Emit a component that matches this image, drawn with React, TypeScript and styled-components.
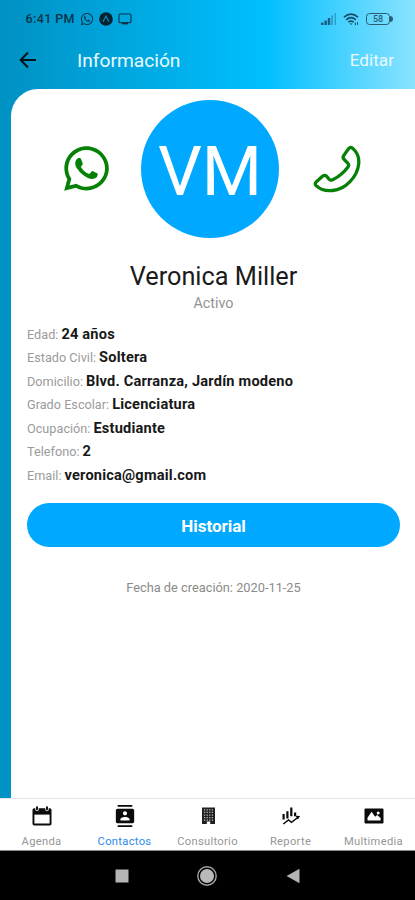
import React from "react";
import styled, { createGlobalStyle } from "styled-components";
import { FaWhatsapp } from "react-icons/fa";
import { MdContacts } from "react-icons/md";

const GlobalStyle = createGlobalStyle`
  * { box-sizing: border-box; }
  body { margin: 0; background: #000; font-family: Roboto, "Liberation Sans", sans-serif; }
  button { font: inherit; border: 0; padding: 0; background: none; }
  svg { display: block; flex: none; }
`;

const Screen = styled.div`
  width: 415px;
  height: 900px;
  display: flex;
  flex-direction: column;
  overflow: hidden;
  background: #000;
`;

const Backdrop = styled.div`
  flex: none;
  height: 798px;
  display: flex;
  flex-direction: column;
  background: linear-gradient(90deg, #0092c3 0%, #0093c5 3%, #00bfff 64%, #8ae3ff 100%);
`;

const StatusBar = styled.div`
  height: 38px;
  padding: 0 22px 0 25.5px;
  display: flex;
  align-items: center;
  justify-content: space-between;
  color: #0b3448;
`;

const StatusGroup = styled.div<{ $gap: number }>`
  display: flex;
  align-items: center;
  gap: ${(p) => p.$gap}px;
`;

const Clock = styled.span`
  font-size: 12.5px;
  line-height: 16px;
  font-weight: 500;
  letter-spacing: 0.4px;
`;

const Header = styled.header`
  height: 50.5px;
  padding: 0 21px 6px 19px;
  display: flex;
  align-items: center;
  color: #e9faff;
`;

const Title = styled.h1`
  flex: 1;
  margin: 1px 0 0 40px;
  font-size: 19.2px;
  line-height: 24px;
  font-weight: 400;
`;

const EditButton = styled.button`
  color: inherit;
  font-size: 17.2px;
  line-height: 24px;
`;

const Card = styled.main`
  flex: 1;
  margin-left: 11px;
  padding: 11px 15px 0 16px;
  border-top-left-radius: 27px;
  background: #fff;
  display: flex;
  flex-direction: column;
`;

const Hero = styled.section`
  height: 138px;
  padding: 0 38px 0 34px;
  display: grid;
  grid-template-columns: 80px 138px 1fr;
  align-items: center;
  color: #078008;
  & > :last-child { justify-self: end; }
`;

const Avatar = styled.div`
  width: 138px;
  height: 138px;
  padding-top: 6px;
  border-radius: 50%;
  display: flex;
  align-items: center;
  justify-content: center;
  background: #00a9ff;
  color: #fff;
  font-size: 69px;
  line-height: 80px;
`;

const Name = styled.h2`
  margin: 24px 0 0;
  text-align: center;
  font-size: 25.3px;
  line-height: 30px;
  font-weight: 400;
  color: #1b1b1b;
`;

const Status = styled.div`
  margin-top: 2px;
  text-align: center;
  font-size: 14.3px;
  line-height: 18px;
  color: #929292;
`;

const Details = styled.dl`
  margin: 11px 0 0;
  display: flex;
  flex-direction: column;
`;

const DetailRow = styled.div`
  height: 23.6px;
  display: flex;
  align-items: baseline;
  gap: 3px;
  line-height: 23.6px;
`;

const Label = styled.dt`
  font-size: 12.7px;
  color: #9b9b9b;
`;

const Value = styled.dd`
  margin: 0;
  font-size: 14.6px;
  letter-spacing: 0.2px;
  font-weight: 700;
  color: #181818;
`;

const HistoryButton = styled.button`
  height: 43.5px;
  margin-top: 15.5px;
  padding-top: 3px;
  border-radius: 22px;
  background: #00a9ff;
  color: #fff;
  font-size: 17px;
  font-weight: 700;
`;

const Created = styled.p`
  margin: 33.5px 0 0;
  text-align: center;
  font-size: 12.8px;
  line-height: 16px;
  color: #8b8b8b;
`;

const TabBar = styled.nav`
  flex: none;
  height: 53px;
  display: grid;
  grid-template-columns: repeat(5, 83px);
  border-top: 1px solid #e6e6e6;
  border-bottom: 1px solid #8a8a8a;
  background: #fff;
`;

const Tab = styled.button<{ $active?: boolean }>`
  padding-top: 6px;
  display: flex;
  flex-direction: column;
  align-items: center;
  justify-content: flex-start;
  gap: 8px;
  font-size: 11.2px;
  line-height: 14px;
  letter-spacing: 0.3px;
  color: ${(p) => (p.$active ? "#2e8bea" : "#969696")};
  svg { color: #0b0b0b; }
`;

const SystemBar = styled.div`
  flex: 1;
  padding: 0 115px 0 114.5px;
  display: flex;
  align-items: center;
  justify-content: space-between;
  background: #000;
`;

const ExpoIcon = () => (
  <svg width="14" height="14" viewBox="0 0 14 14">
    <circle cx="7" cy="7" r="6.8" fill="#06212f" />
    <path d="M4 9.8 7 4.2l3 5.6" fill="none" stroke="#0786b4" strokeWidth="1.3" />
  </svg>
);

const CastIcon = () => (
  <svg width="14" height="12" viewBox="0 0 14 12" fill="none" stroke="currentColor">
    <rect x="1" y="1" width="12" height="8.6" rx="1" strokeWidth="1.1" />
    <path d="M4 10.6h6" strokeWidth="1.6" />
  </svg>
);

const SignalIcon = () => (
  <svg width="16" height="12" viewBox="0 0 16 12" fill="#176080">
    <path d="M0 9.5h2.5V12H0zM3.4 7.5h2.5V12H3.4zM6.8 5h2.4v7H6.8z" />
    <path d="M10.2 2.5h1.8V12h-1.8zM13.7 0H15v12h-1.3z" opacity=".45" />
  </svg>
);

const WifiIcon = () => (
  <svg width="17" height="13" viewBox="0 0 17 13" fill="none" stroke="#164d66" strokeWidth="1.7">
    <path d="M1 4.2Q8-1.8 15 4.2M3.2 6.8Q8 2.6 12.8 6.8M5.4 9.2Q8 7 10.6 9.2" />
    <path d="m6.5 10.4 1.5 1.7 1.5-1.7z" fill="#164d66" stroke="none" />
    <path d="M12.3 9.5v2.7m2.2-3v2.7" strokeWidth="1" />
  </svg>
);

const BatteryShell = styled.div`
  width: 24px;
  height: 12.5px;
  border: 1.5px solid #285d74;
  border-radius: 3.5px;
  font-size: 9px;
  line-height: 10px;
  font-weight: 500;
  text-align: center;
  color: #285d74;
`;

const BatteryTip = styled.div`
  width: 3px;
  height: 6px;
  border-radius: 0 3px 3px 0;
  background: #285d74;
`;

const BackIcon = () => (
  <svg width="18" height="18" viewBox="0 0 18 18" fill="none" stroke="#07141b" strokeWidth="2.1">
    <path d="M17 9H2M9 1.6 1.7 9 9 16.4" />
  </svg>
);

const PhoneIcon = () => (
  <svg width="49" height="48" viewBox="0 0 49 48" fill="none" stroke="currentColor" strokeWidth="3.3" strokeLinejoin="round">
    <path d="M30.7 10.6 35.6 3.6Q37.6 1.4 39.8 3.4C44.1 7.2 46.3 12.6 45.7 18.8C44.4 31.7 32.5 44.4 19.7 45.5C13.2 46.2 7.2 44.4 3.1 40.6Q1.2 38.5 3.4 36.7L9.5 31.2Q11.7 29.5 13.6 31.3L16 34.1Q17.9 36 20.4 34.4Q28.8 30 35 21.9Q36.5 19.9 34.5 17.9L31.2 14.5Q29.3 12.6 30.7 10.6Z" />
  </svg>
);

const CalendarIcon = () => (
  <svg width="22" height="22" viewBox="0 0 22 22">
    <path d="M3.2 3.2h15.6Q20.5 3.2 20.5 5.1v13.4Q20.5 20.4 18.8 20.4H3.2Q1.5 20.4 1.5 18.5V5.1Q1.5 3.2 3.2 3.2Z" fill="currentColor" />
    <path d="M3.4 9.6h15.2v8.9H3.4z" fill="#fff" />
    <path d="M6 1.5v3m10-3v3" stroke="#fff" strokeWidth="3.4" strokeLinecap="round" />
    <path d="M6 2.1v2.4m10-2.4v2.4" stroke="currentColor" strokeWidth="1.9" strokeLinecap="round" />
  </svg>
);

const BuildingIcon = () => (
  <svg width="22" height="22" viewBox="0 0 22 22">
    <path d="M5 2.5h13V19h-4.8v-2.4H9.8V19H5z" fill="#202020" />
    <path d="M7.6 4.2v11.6m2.6-11.6v11.6m2.6-11.6v11.6m2.6-11.6v11.6" stroke="#b5b5b5" strokeWidth="1.3" strokeDasharray="1.3 1.3" />
  </svg>
);

const ReportIcon = () => (
  <svg width="22" height="22" viewBox="0 0 22 22" fill="none" stroke="currentColor">
    <path d="M3.6 9v5.5M7.4 6.3v7.2M11.3 2.6v8.6M15.1 7.5v3.8" strokeWidth="2.2" />
    <path d="m3.3 19 5.2-4 3 2.3L18.5 12" strokeWidth="1.5" />
    <path d="m15.5 10.7 4.6.2-2.2 3.6z" fill="currentColor" stroke="none" />
  </svg>
);

const GalleryIcon = () => (
  <svg width="22" height="22" viewBox="0 0 22 22">
    <rect x="1.5" y="3.4" width="19" height="15.2" rx="1" fill="currentColor" />
    <path d="M4.5 15.5v-2.8l4.1-6 3.5 5.1 2-1.7 3.5 2.9v2.5z" fill="#fff" />
    <circle cx="15.2" cy="7.9" r="1.5" fill="#fff" />
  </svg>
);

const details = [
  ["Edad:", "24 años"],
  ["Estado Civil:", "Soltera"],
  ["Domicilio:", "Blvd. Carranza, Jardín modeno"],
  ["Grado Escolar:", "Licenciatura"],
  ["Ocupación:", "Estudiante"],
  ["Telefono:", "2"],
  ["Email:", "veronica@gmail.com"],
];

const tabs = [
  { label: "Agenda", icon: <CalendarIcon /> },
  { label: "Contactos", icon: <MdContacts size={22} />, active: true },
  { label: "Consultorio", icon: <BuildingIcon /> },
  { label: "Reporte", icon: <ReportIcon /> },
  { label: "Multimedia", icon: <GalleryIcon /> },
];

export default function App() {
  return (
    <>
      <GlobalStyle />
      <Screen>
        <Backdrop>
          <StatusBar>
            <StatusGroup $gap={5}>
              <Clock>6:41 PM</Clock>
              <FaWhatsapp size={14} />
              <ExpoIcon />
              <CastIcon />
            </StatusGroup>
            <StatusGroup $gap={6}>
              <SignalIcon />
              <WifiIcon />
              <StatusGroup $gap={0}>
                <BatteryShell>58</BatteryShell>
                <BatteryTip />
              </StatusGroup>
            </StatusGroup>
          </StatusBar>
          <Header>
            <BackIcon />
            <Title>Información</Title>
            <EditButton>Editar</EditButton>
          </Header>
          <Card>
            <Hero>
              <FaWhatsapp size={51} />
              <Avatar>VM</Avatar>
              <PhoneIcon />
            </Hero>
            <Name>Veronica Miller</Name>
            <Status>Activo</Status>
            <Details>
              {details.map(([label, value]) => (
                <DetailRow key={label}>
                  <Label>{label}</Label>
                  <Value>{value}</Value>
                </DetailRow>
              ))}
            </Details>
            <HistoryButton>Historial</HistoryButton>
            <Created>Fecha de creación: 2020-11-25</Created>
          </Card>
        </Backdrop>
        <TabBar>
          {tabs.map((tab) => (
            <Tab key={tab.label} $active={tab.active}>
              {tab.icon}
              {tab.label}
            </Tab>
          ))}
        </TabBar>
        <SystemBar>
          <svg width="14" height="14" viewBox="0 0 14 14"><path d="M.5.5h13v13H.5z" fill="#b4b4b4" /></svg>
          <svg width="20" height="20" viewBox="0 0 20 20">
            <circle cx="10" cy="10" r="9.2" fill="none" stroke="#a5a5a5" strokeWidth="1.4" />
            <circle cx="10" cy="10" r="7" fill="#b9b9b9" />
          </svg>
          <svg width="14" height="16" viewBox="0 0 14 16"><path d="M13.5.8v14.4L.5 8z" fill="#b4b4b4" /></svg>
        </SystemBar>
      </Screen>
    </>
  );
}
